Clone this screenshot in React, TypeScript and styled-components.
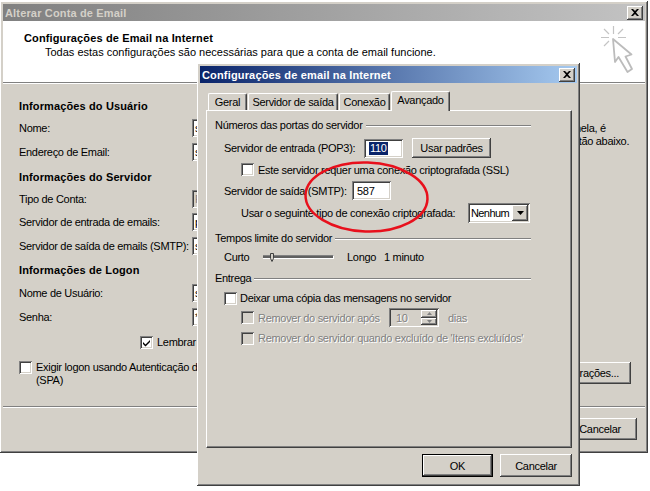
import React from "react";
import styled, { createGlobalStyle, css } from "styled-components";

const Global = createGlobalStyle`
  html, body { margin: 0; padding: 0; background: #fff; }
  body { width: 650px; height: 491px; overflow: hidden; font: 11px "Liberation Sans", Arial, sans-serif; color: #000; }
`;

const raised = css`
  box-shadow: inset -1px -1px #404040, inset 1px 1px #fff, inset -2px -2px #808080, inset 2px 2px #d4d0c8;
`;
const sunken = css`
  box-shadow: inset 1px 1px #808080, inset -1px -1px #fff, inset 2px 2px #404040, inset -2px -2px #d4d0c8;
`;

const Desktop = styled.div`
  position: relative;
  width: 650px;
  height: 491px;
  overflow: hidden;
`;
const Window = styled.div<{ $x: number; $y: number; $w: number; $h: number }>`
  position: absolute;
  left: ${(p) => p.$x}px;
  top: ${(p) => p.$y}px;
  width: ${(p) => p.$w}px;
  height: ${(p) => p.$h}px;
  box-sizing: border-box;
  padding: 3px;
  background: #d4d0c8;
  display: flex;
  flex-direction: column;
  ${raised}
`;
const TitleBar = styled.div<{ $active?: boolean }>`
  height: 17px;
  flex: none;
  display: flex;
  align-items: center;
  justify-content: space-between;
  padding: 0 2px 0 2px;
  font-weight: bold;
  letter-spacing: 0.16px;
  color: ${(p) => (p.$active ? "#fff" : "#d4d0c8")};
  background: ${(p) =>
    p.$active
      ? "linear-gradient(90deg,#0a246a,#a6caf0)"
      : "linear-gradient(90deg,#808080,#c3c3c3)"};
`;
const CloseButton = styled.div`
  width: 16px;
  height: 14px;
  background: #d4d0c8;
  display: flex;
  align-items: center;
  justify-content: center;
  ${raised}
`;
const CloseIcon = () => (
  <svg width="8" height="7" viewBox="0 0 8 7">
    <path d="M0 0h2l2 2 2-2h2L5 3.500 8 7H6L4 5 2 7H0l3-3.500z" fill="#000" />
  </svg>
);

const Header = styled.div`
  height: 62px;
  flex: none;
  background: #fff;
  border-bottom: 1px solid #808080;
  box-shadow: 0 1px #fff;
  display: flex;
  justify-content: space-between;
  padding: 10px 9px 0 21px;
  box-sizing: border-box;
`;
const HeaderTitle = styled.div`
  font-weight: bold;
  letter-spacing: 0.13px;
  line-height: 14px;
`;
const HeaderSub = styled.div`
  padding-left: 21px;
  line-height: 15px;
`;
const WizardSvg = styled.svg`
  flex: none;
  margin-top: -5px;
`;
const Form = styled.div`
  flex: 1;
  display: flex;
  padding: 12px 0 0 16px;
  min-height: 0;
  letter-spacing: -0.3px;
`;
const FormLeft = styled.div`
  width: 360px;
  flex: none;
`;
const FormRight = styled.div`
  flex: 1;
  min-width: 0;
  display: flex;
  flex-direction: column;
  align-items: flex-end;
  padding: 27px 14px 0 0;
`;
const Note = styled.div`
  align-self: flex-start;
  margin-left: 188px;
  line-height: 13px;
  white-space: nowrap;
`;
const Row = styled.div<{ $h: number; $bold?: boolean; $indent?: number; $top?: number }>`
  height: ${(p) => p.$h}px;
  margin-top: ${(p) => p.$top ?? 0}px;
  display: flex;
  align-items: center;
  white-space: nowrap;
  padding-left: ${(p) => p.$indent ?? 0}px;
  font-weight: ${(p) => (p.$bold ? "bold" : "normal")};
  letter-spacing: ${(p) => (p.$bold ? "0.13px" : "-0.3px")};
`;
const Label = styled.div`
  width: 173px;
  flex: none;
`;
const BackField = styled.div<{ $disabled?: boolean }>`
  width: 170px;
  height: 18px;
  box-sizing: border-box;
  padding: 3px 0 0 3px;
  line-height: 12px;
  background: ${(p) => (p.$disabled ? "#d4d0c8" : "#fff")};
  color: ${(p) => (p.$disabled ? "#808080" : "#000")};
  ${sunken}
`;
const Divider = styled.div`
  height: 1px;
  flex: none;
  background: #808080;
  box-shadow: 0 1px #fff;
`;
const Footer = styled.div`
  height: 43px;
  flex: none;
  display: flex;
  align-items: center;
  justify-content: flex-end;
  padding: 0 8px 0 0;
  letter-spacing: -0.3px;
`;
const Button = styled.div<{ $w: number; $h?: number; $default?: boolean; $top?: number }>`
  width: ${(p) => p.$w}px;
  height: ${(p) => p.$h ?? 22}px;
  margin-top: ${(p) => p.$top ?? 0}px;
  flex: none;
  box-sizing: border-box;
  display: flex;
  align-items: center;
  justify-content: center;
  background: #d4d0c8;
  ${raised}
  ${(p) =>
    p.$default &&
    css`
      outline: 1px solid #000;
      outline-offset: -1px;
      box-shadow: inset -2px -2px #404040, inset 2px 2px #fff, inset -3px -3px #808080;
    `}
`;
const Check = styled.div<{ $disabled?: boolean }>`
  width: 13px;
  height: 13px;
  flex: none;
  background: ${(p) => (p.$disabled ? "#d4d0c8" : "#fff")};
  display: flex;
  align-items: center;
  justify-content: center;
  ${sunken}
`;
const CheckLabel = styled.span<{ $disabled?: boolean; $gap?: number; $w?: number }>`
  margin-left: ${(p) => p.$gap ?? 4}px;
  ${(p) => p.$w && `width: ${p.$w}px;`}
  ${(p) =>
    p.$disabled &&
    css`
      color: #808080;
      text-shadow: 1px 1px #fff;
    `}
`;
const TopRow = styled.div`
  display: flex;
  align-items: flex-start;
  padding-top: 7px;
  line-height: 13px;
  white-space: nowrap;
`;

const TabStrip = styled.div`
  display: flex;
  align-items: flex-end;
  height: 27px;
  flex: none;
  padding: 0 0 0 8px;
  gap: 1px;
  position: relative;
  z-index: 1;
  letter-spacing: -0.3px;
`;
const Tab = styled.div<{ $w: number; $active?: boolean }>`
  width: ${(p) => p.$w}px;
  height: ${(p) => (p.$active ? 20 : 17)}px;
  flex: none;
  box-sizing: border-box;
  background: #d4d0c8;
  margin-bottom: ${(p) => (p.$active ? -1 : 0)}px;
  border-top: 1px solid #fff;
  border-left: 1px solid #fff;
  border-right: 1px solid #404040;
  box-shadow: inset -1px 0 #808080;
  border-radius: 2px 2px 0 0;
  text-align: center;
  line-height: ${(p) => (p.$active ? 16 : 17)}px;
  white-space: nowrap;
`;
const TabPanel = styled.div`
  margin: 0 5px 0 6px;
  height: 338px;
  flex: none;
  box-sizing: border-box;
  padding: 6px 0 0 8px;
  border-top: 1px solid #fff;
  border-left: 1px solid #fff;
  border-right: 1px solid #404040;
  border-bottom: 1px solid #404040;
  box-shadow: inset -1px -1px #808080;
  letter-spacing: -0.3px;
`;
const GroupHead = styled.div<{ $top?: number }>`
  height: 16px;
  margin-top: ${(p) => p.$top ?? 0}px;
  width: 316px;
  display: flex;
  align-items: center;
  white-space: nowrap;
  &::after {
    content: "";
    flex: 1;
    height: 1px;
    margin-left: 3px;
    background: #808080;
    box-shadow: 0 1px #fff;
  }
`;
const Spacer = styled.div<{ $w: number }>`
  width: ${(p) => p.$w}px;
  flex: none;
`;
const PortField = styled.div<{ $pad?: number }>`
  width: 39px;
  height: 19px;
  flex: none;
  box-sizing: border-box;
  background: #fff;
  padding-left: ${(p) => p.$pad ?? 5}px;
  display: flex;
  align-items: center;
  ${sunken}
`;
const Selected = styled.span`
  background: #0a246a;
  color: #fff;
  padding: 0 1px;
  line-height: 13px;
`;
const SelectBox = styled.div`
  width: 62px;
  height: 20px;
  flex: none;
  box-sizing: border-box;
  background: #fff;
  padding: 2px 2px 2px 3px;
  letter-spacing: -0.6px;
  display: flex;
  align-items: center;
  justify-content: space-between;
  ${sunken}
`;
const ArrowButton = styled.div`
  width: 16px;
  height: 16px;
  background: #d4d0c8;
  display: flex;
  align-items: center;
  justify-content: center;
  ${raised}
`;
const SliderTrack = styled.div`
  position: relative;
  width: 71px;
  height: 4px;
  flex: none;
  box-sizing: border-box;
  margin: 0 13px 0 11px;
  background: #606060;
  border-top: 1px solid #808080;
  border-right: 1px solid #fff;
  border-bottom: 1px solid #fff;
`;
const SliderThumb = styled.svg`
  position: absolute;
  left: 7px;
  top: -3px;
`;
const Spin = styled.div`
  width: 50px;
  height: 19px;
  flex: none;
  box-sizing: border-box;
  padding: 2px 2px 2px 7px;
  color: #808080;
  text-shadow: 1px 1px #fff;
  display: flex;
  align-items: center;
  justify-content: space-between;
  ${sunken}
`;
const SpinButtons = styled.div`
  width: 16px;
  height: 15px;
  display: grid;
  grid-template-rows: 1fr 1fr;
`;
const SpinButton = styled.div`
  background: #d4d0c8;
  ${raised}
  display: flex;
  align-items: center;
  justify-content: center;
`;
const DialogFooter = styled.div`
  display: flex;
  justify-content: flex-end;
  gap: 7px;
  padding: 6px 5px 0 0;
  letter-spacing: -0.3px;
`;
const Overlay = styled.svg`
  position: absolute;
  left: 0;
  top: 0;
  pointer-events: none;
`;

const CheckMark = () => (
  <svg width="9" height="9" viewBox="0 0 9 9">
    <path d="M1 4l2.500 2.500L8 2v2L3.500 8.500 1 6z" fill="#000" />
  </svg>
);
const Wizard = () => (
  <WizardSvg width="40" height="50" viewBox="0 0 40 50">
    <path d="M17.500 0v8M5 11.500h8M22 11.500h8M8 3l5 5M27 3l-5 5M8 20l5-5" stroke="#c4c4c4" strokeWidth="1.200" fill="none" />
    <path d="M17 13l2 23 3.500-5 9 15 4.500-3-6.500-12.500 6-2z" fill="#fff" stroke="#bcbcbc" strokeWidth="1.800" strokeLinejoin="round" />
  </WizardSvg>
);

const backRows: { h: number; label: string; value?: string; bold?: boolean; disabled?: boolean }[] = [
  { h: 22, label: "Informações do Usuário", bold: true },
  { h: 22, label: "Nome:", value: "s" },
  { h: 26, label: "Endereço de Email:", value: "s" },
  { h: 24, label: "Informações do Servidor", bold: true },
  { h: 20, label: "Tipo de Conta:", value: "P", disabled: true },
  { h: 25, label: "Servidor de entrada de emails:", value: "p" },
  { h: 23, label: "Servidor de saída de emails (SMTP):", value: "s" },
  { h: 26, label: "Informações de Logon", bold: true },
  { h: 20, label: "Nome de Usuário:", value: "s" },
  { h: 27, label: "Senha:", value: "*" },
];

export default function App() {
  return (
    <Desktop>
      <Global />
      <Window $x={0} $y={1} $w={648} $h={452}>
        <TitleBar>
          <span>Alterar Conta de Email</span>
          <CloseButton>
            <CloseIcon />
          </CloseButton>
        </TitleBar>
        <Header>
          <div>
            <HeaderTitle>Configurações de Email na Internet</HeaderTitle>
            <HeaderSub>Todas estas configurações são necessárias para que a conta de email funcione.</HeaderSub>
          </div>
          <Wizard />
        </Header>
        <Form>
          <FormLeft>
            {backRows.map((r) => (
              <Row key={r.label} $h={r.h} $bold={r.bold}>
                <Label>{r.label}</Label>
                {r.value && <BackField $disabled={r.disabled}>{r.value}</BackField>}
              </Row>
            ))}
            <Row $h={24} $indent={121}>
              <Check>
                <CheckMark />
              </Check>
              <CheckLabel>Lembrar senha</CheckLabel>
            </Row>
            <TopRow>
              <Check />
              <CheckLabel>
                Exigir logon usando Autenticação de Senha de Segurança
                <br />
                (SPA)
              </CheckLabel>
            </TopRow>
          </FormLeft>
          <FormRight>
            <Note>
              janela, é
              <br />
              botão abaixo.
            </Note>
            <Button $w={124} $top={214}>Mais Configurações...</Button>
          </FormRight>
        </Form>
        <Divider />
        <Footer>
          <Button $w={74}>Cancelar</Button>
        </Footer>
      </Window>

      <Window $x={197} $y={63} $w={383} $h={423}>
        <TitleBar $active>
          <span>Configurações de email na Internet</span>
          <CloseButton>
            <CloseIcon />
          </CloseButton>
        </TitleBar>
        <TabStrip>
          <Tab $w={39}>Geral</Tab>
          <Tab $w={90}>Servidor de saída</Tab>
          <Tab $w={51}>Conexão</Tab>
          <Tab $w={59} $active>Avançado</Tab>
        </TabStrip>
        <TabPanel>
          <GroupHead>Números das portas do servidor</GroupHead>
          <Row $h={20} $indent={9} $top={5}>
            <Spacer $w={140}>Servidor de entrada (POP3):</Spacer>
            <PortField $pad={5}><Selected>110</Selected></PortField>
            <Spacer $w={9} />
            <Button $w={79} $h={20}>Usar padrões</Button>
          </Row>
          <Row $h={19} $indent={26} $top={2}>
            <Check />
            <CheckLabel>Este servidor requer uma conexão criptografada (SSL)</CheckLabel>
          </Row>
          <Row $h={19} $indent={9} $top={2}>
            <Spacer $w={128}>Servidor de saída (SMTP):</Spacer>
            <PortField>587</PortField>
          </Row>
          <Row $h={20} $indent={26} $top={3}>
            <Spacer $w={227}>Usar o seguinte tipo de conexão criptografada:</Spacer>
            <SelectBox>
              Nenhum
              <ArrowButton>
                <svg width="7" height="4" viewBox="0 0 7 4"><path d="M0 0h7L3.500 4z" fill="#000" /></svg>
              </ArrowButton>
            </SelectBox>
          </Row>
          <GroupHead $top={7}>Tempos limite do servidor</GroupHead>
          <Row $h={14} $indent={9} $top={4}>
            <Spacer $w={28}>Curto</Spacer>
            <SliderTrack>
              <SliderThumb width="5" height="9" viewBox="0 0 5 9">
                <path d="M0.500 0.500h3v5l-1.500 3-1.500-3z" fill="#d4d0c8" stroke="#404040" />
              </SliderThumb>
            </SliderTrack>
            <Spacer $w={37}>Longo</Spacer>
            <span>1 minuto</span>
          </Row>
          <GroupHead $top={6}>Entrega</GroupHead>
          <Row $h={18} $indent={9} $top={3}>
            <Check />
            <CheckLabel $gap={3}>Deixar uma cópia das mensagens no servidor</CheckLabel>
          </Row>
          <Row $h={19} $indent={26} $top={1}>
            <Check $disabled />
            <CheckLabel $disabled $w={131}>Remover do servidor após</CheckLabel>
            <Spin>
              10
              <SpinButtons>
                <SpinButton><svg width="5" height="3" viewBox="0 0 5 3"><path d="M2.500 0L5 3H0z" fill="#808080" /></svg></SpinButton>
                <SpinButton><svg width="5" height="3" viewBox="0 0 5 3"><path d="M0 0h5L2.500 3z" fill="#808080" /></svg></SpinButton>
              </SpinButtons>
            </Spin>
            <CheckLabel $disabled $gap={9}>dias</CheckLabel>
          </Row>
          <Row $h={18} $indent={26} $top={2}>
            <Check $disabled />
            <CheckLabel $disabled>Remover do servidor quando excluído de 'Itens excluídos'</CheckLabel>
          </Row>
        </TabPanel>
        <DialogFooter>
          <Button $w={71} $h={23} $default>OK</Button>
          <Button $w={72} $h={23}>Cancelar</Button>
        </DialogFooter>
      </Window>

      <Overlay width="650" height="491" viewBox="0 0 650 491">
        <ellipse cx="366.500" cy="197" rx="61" ry="34.500" fill="none" stroke="#e8101c" strokeWidth="2.500" transform="rotate(2 366.500 197)" />
      </Overlay>
    </Desktop>
  );
}
